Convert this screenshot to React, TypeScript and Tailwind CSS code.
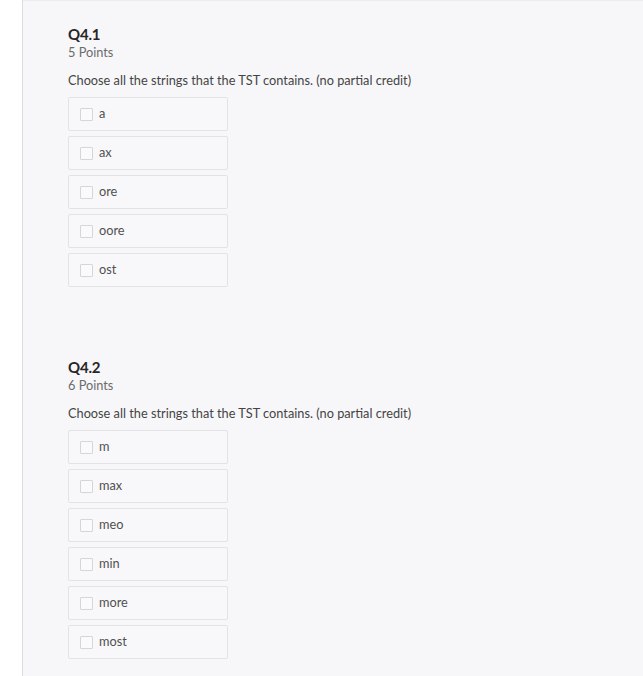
import React from "react";

const Box = ({ label }: { label: string }) => (
  <div className="w-[160px] h-[34px] border border-[#e3e3e6] rounded-[2px] bg-[#f8f8fa] flex items-center pl-[11px]">
    <div className="w-[13px] h-[13px] border border-[#d6d6da] bg-[#fafafb] rounded-[1px] shrink-0" />
    <div className="ml-[6px] text-[12.75px] text-[#505050]">{label}</div>
  </div>
);

const Question = ({ title, points, options }: { title: string; points: string; options: string[] }) => (
  <div>
    <div className="text-[15px] leading-[20px] font-bold text-[#262626] tracking-[-0.2px]">{title}</div>
    <div className="text-[12.75px] leading-[16px] text-[#6b6b6b]">{points}</div>
    <div className="mt-[12px] text-[12.75px] leading-[16px] text-[#444444]">
      Choose all the strings that the TST contains. (no partial credit)
    </div>
    <div className="mt-[9px] flex flex-col gap-[5px]">
      {options.map((o) => (
        <Box key={o} label={o} />
      ))}
    </div>
  </div>
);

export default function App() {
  return (
    <div className="w-[643px] h-[676px] flex bg-white overflow-hidden" style={{ fontFamily: "Lato, 'Open Sans', sans-serif" }}>
      <div className="w-[22px] shrink-0 bg-white" />
      <div className="w-px shrink-0 bg-[#dcdce0]" />
      <div className="flex-1 bg-[#f7f7f9] border-t border-[#ececef] pl-[45px] pt-[23px] flex flex-col gap-[70px]">
        <Question title="Q4.1" points="5 Points" options={["a", "ax", "ore", "oore", "ost"]} />
        <Question title="Q4.2" points="6 Points" options={["m", "max", "meo", "min", "more", "most"]} />
      </div>
    </div>
  );
}
